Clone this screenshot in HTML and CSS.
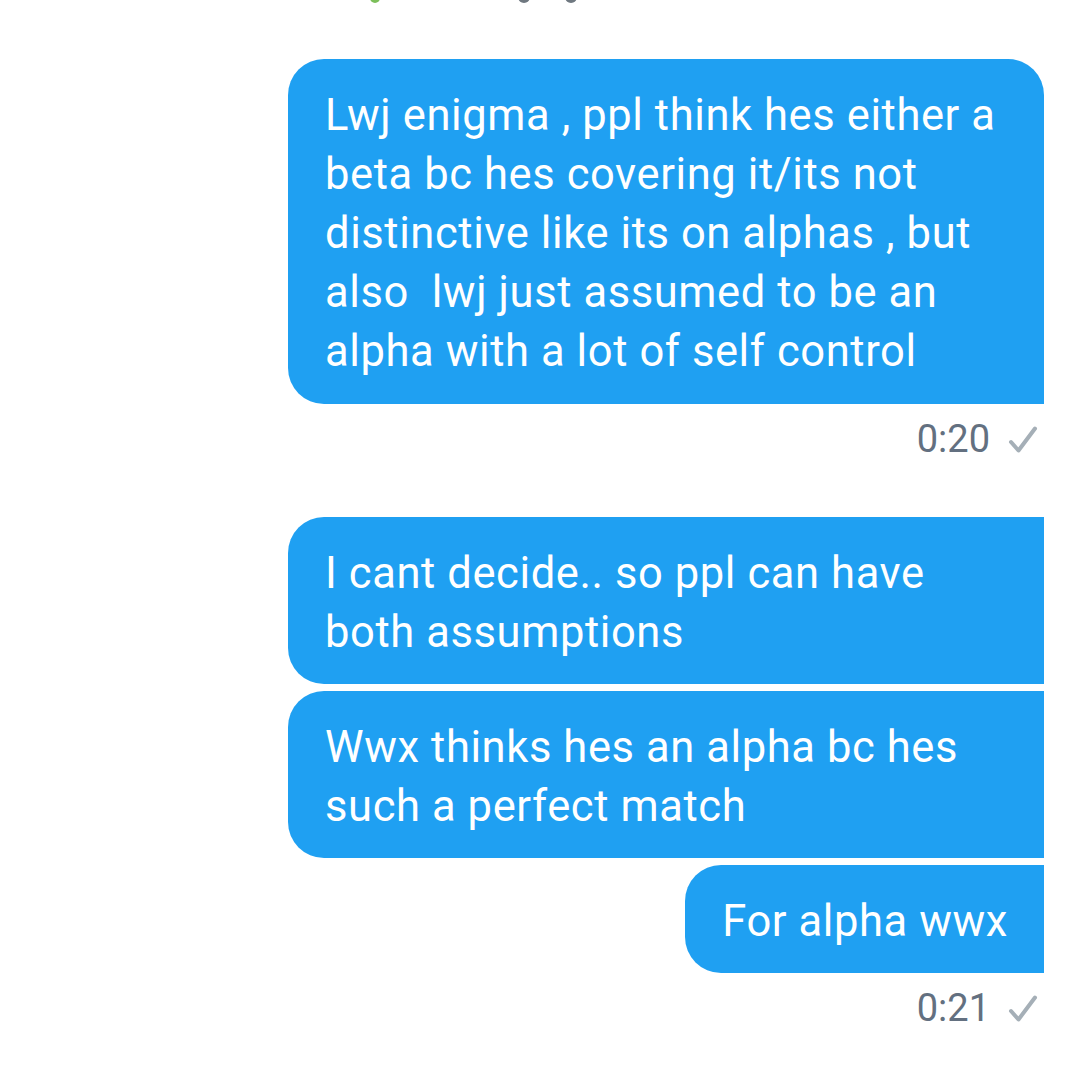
FILE: index.html
```html
<!DOCTYPE html>
<html>
<head>
<meta charset="utf-8">
<link rel="stylesheet" href="styles.css">
</head>
<body>
<div class="top-strip">
  <span class="dot green"></span>
  <span class="dot gray g1"></span>
  <span class="dot gray g2"></span>
</div>
<main class="chat">
  <div class="bubble wide first">Lwj enigma , ppl think hes either a<br>beta bc hes covering it/its not<br>distinctive like its on alphas , but<br>also &nbsp;lwj just assumed to be an<br>alpha with a lot of self control</div>
  <div class="meta">
    <span class="time">0:20</span>
    <svg class="check" width="30" height="28" viewBox="0 0 30 28"><path d="M3 16 L10.5 24.5 L27 2.5" fill="none" stroke="#a5afb7" stroke-width="4" stroke-linecap="round" stroke-linejoin="round"/></svg>
  </div>
  <div class="group">
    <div class="bubble wide">I cant decide.. so ppl can have<br>both assumptions</div>
    <div class="bubble wide">Wwx thinks hes an alpha bc hes<br>such a perfect match</div>
    <div class="bubble">For alpha wwx</div>
  </div>
  <div class="meta">
    <span class="time">0:21</span>
    <svg class="check" width="30" height="28" viewBox="0 0 30 28"><path d="M3 16 L10.5 24.5 L27 2.5" fill="none" stroke="#a5afb7" stroke-width="4" stroke-linecap="round" stroke-linejoin="round"/></svg>
  </div>
</main>
</body>
</html>
```

FILE: styles.css
```css
* { box-sizing: border-box; }
html, body {
  margin: 0;
  padding: 0;
  background: #ffffff;
}
body {
  width: 1080px;
  height: 1085px;
  overflow: hidden;
  font-family: Roboto, "Liberation Sans", sans-serif;
}
.top-strip {
  height: 3px;
  overflow: hidden;
  display: flex;
  align-items: flex-end;
  padding-left: 370px;
}
.dot {
  display: block;
  border-radius: 50%;
  margin-top: -8px;
}
.green {
  width: 10px;
  height: 10px;
  background: #7cbf5a;
}
.gray {
  width: 12px;
  height: 12px;
  background: #6f7880;
}
.g1 { margin-left: 138px; }
.g2 { margin-left: 35px; }
.chat {
  display: flex;
  flex-direction: column;
  align-items: flex-end;
  padding: 56px 36px 0 0;
}
.group {
  display: flex;
  flex-direction: column;
  align-items: flex-end;
  gap: 7px;
  margin-top: 54px;
}
.bubble {
  background: #1fa0f2;
  color: #ffffff;
  font-size: 43.5px;
  letter-spacing: 0.6px;
  line-height: 59px;
  padding: 27px 36px 22px 37px;
  border-radius: 36px 0 0 36px;
  white-space: nowrap;
}
.bubble.wide { width: 756px; }
.bubble.first {
  border-radius: 36px 36px 0 36px;
  padding-bottom: 23px;
}
.meta {
  display: flex;
  align-items: center;
  gap: 18px;
  margin-top: 11px;
  padding-right: 6px;
  height: 48px;
}
.time {
  font-size: 38px;
  line-height: 48px;
  color: #637080;
}
.check { display: block; margin-top: 2px; }
```
